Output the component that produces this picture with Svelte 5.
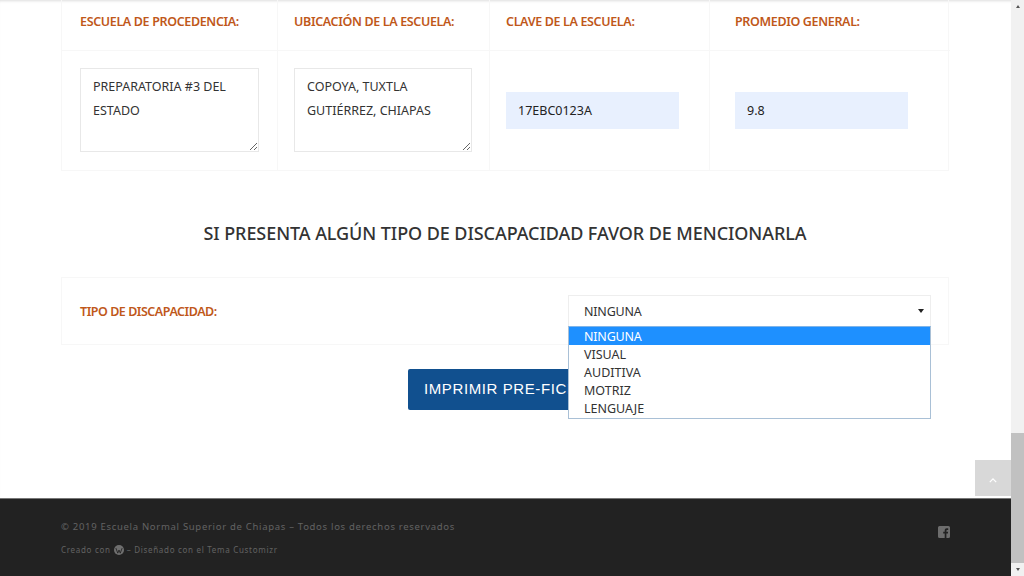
<script lang="ts">
	const options = ['NINGUNA', 'VISUAL', 'AUDITIVA', 'MOTRIZ', 'LENGUAJE']
	let selected = $state('NINGUNA')
	let school = $state('PREPARATORIA #3 DEL ESTADO')
	let place = $state('COPOYA, TUXTLA GUTIÉRREZ, CHIAPAS')
</script>

<div class="window">
	<div class="page">
		<main>
			<section class="school">
				<div class="cell head">ESCUELA DE PROCEDENCIA:</div>
				<div class="cell head">UBICACIÓN DE LA ESCUELA:</div>
				<div class="cell head">CLAVE DE LA ESCUELA:</div>
				<div class="cell head">PROMEDIO GENERAL:</div>
				<div class="cell body"><textarea bind:value={school}></textarea></div>
				<div class="cell body"><textarea bind:value={place}></textarea></div>
				<div class="cell body"><input value="17EBC0123A" /></div>
				<div class="cell body"><input value="9.8" /></div>
			</section>

			<h2>SI PRESENTA ALGÚN TIPO DE DISCAPACIDAD FAVOR DE MENCIONARLA</h2>

			<section class="disability">
				<div class="label">TIPO DE DISCAPACIDAD:</div>
				<div class="picker">
					<div class="select">
						<span>{selected}</span>
						<i class="caret"></i>
					</div>
					<ul class="options">
						{#each options as option}
							<li class:active={option === selected}>{option}</li>
						{/each}
					</ul>
				</div>
			</section>

			<div class="actions">
				<button type="button">IMPRIMIR PRE-FICHA</button>
			</div>
		</main>

		<footer>
			<div>
				<p class="copy">© 2019 Escuela Normal Superior de Chiapas – Todos los derechos reservados</p>
				<p class="credit">
					<span>Creado con</span>
					<svg viewBox="0 0 16 16" width="10" height="10">
						<circle cx="8" cy="8" r="8" fill="#6f6f6f" />
						<path d="M3 5l3 8 2-5 2 5 3-8" fill="none" stroke="#222" stroke-width="1.4" />
					</svg>
					<span>– Diseñado con el Tema Customizr</span>
				</p>
			</div>
			<svg class="fb" viewBox="0 0 12 12" width="12" height="12">
				<path
					fill="#6d6d6d"
					fill-rule="evenodd"
					d="M1.5 0h9A1.5 1.5 0 0 1 12 1.5v9a1.5 1.5 0 0 1-1.5 1.5H8.4V7.5h1.5l.2-1.7H8.4V4.7c0-.5.2-.8.8-.8h1V2.4c-.3 0-.8-.1-1.3-.1-1.3 0-2.2.8-2.2 2.2v1.3H5.2v1.7h1.5V12H1.5A1.5 1.5 0 0 1 0 10.5v-9A1.5 1.5 0 0 1 1.5 0z"
				/>
			</svg>
		</footer>

		<button type="button" class="to-top" aria-label="Volver arriba">
			<svg viewBox="0 0 10 6" width="8" height="5">
				<path d="M1 5l4-4 4 4" fill="none" stroke="#fff" stroke-width="1.6" />
			</svg>
		</button>
	</div>

	<aside class="scrollbar">
		<span class="arrow up"></span>
		<div class="track"><div class="thumb"></div></div>
		<span class="arrow down"></span>
	</aside>
</div>

<style>
	:global(body) {
		margin: 0;
		background: #fff;
	}

	.window {
		display: flex;
		height: 576px;
		overflow: hidden;
		font-family: 'Noto Sans', 'Open Sans', sans-serif;
		color: #333;
	}

	.page {
		position: relative;
		flex: 1;
		display: flex;
		flex-direction: column;
		min-width: 0;
		box-shadow: inset 0 3px 3px -2px #ddd;
	}

	main {
		flex: 1;
		padding: 0 62px 0 61px;
	}

	.school {
		display: grid;
		grid-template-columns: 216px 212px 220px 240px;
		border: 1px solid #f7f7f7;
		border-top: 0;
	}

	.cell {
		padding: 0 16px;
		box-sizing: border-box;
		border-right: 1px solid #f7f7f7;
	}

	.cell:nth-child(4n + 1) {
		padding-left: 18px;
	}

	.cell:nth-child(4n) {
		border-right: 0;
		padding-left: 25px;
	}

	.head {
		height: 51px;
		padding-top: 12px;
		border-bottom: 1px solid #f7f7f7;
		font-size: 12.5px;
		line-height: 20px;
		font-weight: 600;
		letter-spacing: -0.35px;
		color: #c0581a;
	}

	.body {
		height: 119px;
		display: flex;
		align-items: center;
	}

	textarea {
		width: 179px;
		height: 84px;
		margin-bottom: 2px;
		box-sizing: border-box;
		padding: 6px 12px;
		border: 1px solid #e8e8e8;
		background: #fff;
		font: 12.5px/24px 'Noto Sans', sans-serif;
		color: #333;
	}

	.cell:nth-child(6) textarea {
		width: 178px;
	}

	input {
		width: 173px;
		height: 37px;
		box-sizing: border-box;
		padding: 0 12px;
		border: 0;
		background: #e8f0fe;
		font: 12.5px 'Noto Sans', sans-serif;
		color: #222;
	}

	h2 {
		margin: 49px 0 0;
		font-size: 18px;
		line-height: 26px;
		font-weight: 500;
		letter-spacing: -0.07px;
		text-align: center;
		color: #333;
	}

	.disability {
		margin-top: 31px;
		height: 68px;
		box-sizing: border-box;
		display: flex;
		align-items: center;
		justify-content: space-between;
		padding: 0 17px 0 18px;
		border: 1px solid #f7f7f7;
	}

	.label {
		font-size: 12.5px;
		font-weight: 600;
		letter-spacing: -0.47px;
		color: #c0581a;
	}

	.picker {
		position: relative;
		width: 363px;
	}

	.select {
		height: 32px;
		box-sizing: border-box;
		display: flex;
		align-items: center;
		justify-content: space-between;
		padding: 0 6px 0 15px;
		border: 1px solid #eee;
		font-size: 12.5px;
		letter-spacing: -0.2px;
		color: #333;
	}

	.caret {
		width: 0;
		height: 0;
		border: 3px solid transparent;
		border-top: 4px solid #222;
		border-bottom: 0;
	}

	.options {
		position: absolute;
		z-index: 2;
		top: 31px;
		left: 0;
		right: 0;
		margin: 0;
		padding: 0 0 1px;
		list-style: none;
		background: #fff;
		border: 1px solid #a9c0d6;
		border-top-color: #7fb4e8;
		box-sizing: border-box;
		font-size: 12.5px;
		line-height: 20px;
	}

	.options li {
		height: 18px;
		padding-left: 15px;
	}

	.options .active {
		background: #1e90ff;
		color: #fff;
		letter-spacing: -0.2px;
	}

	.actions {
		margin-top: 24px;
		display: flex;
		justify-content: center;
	}

	.actions button {
		width: 194px;
		height: 41px;
		border: 0;
		border-radius: 2px;
		background: #11508f;
		color: #fff;
		font: 15px 'Liberation Sans', Arial, sans-serif;
		letter-spacing: 0.6px;
		white-space: nowrap;
		overflow: hidden;
		padding: 0 0 2px 16px;
		text-align: left;
	}

	footer {
		height: 78px;
		box-sizing: border-box;
		display: flex;
		justify-content: space-between;
		align-items: flex-start;
		padding: 21px 61px 0;
		background: #222;
		border-top: 1px solid #777;
		color: #626262;
	}

	footer p {
		margin: 0;
	}

	.copy {
		font-size: 9.5px;
		line-height: 14px;
		letter-spacing: 0.7px;
	}

	.credit {
		margin-top: 9px !important;
		display: flex;
		align-items: center;
		gap: 3px;
		font-size: 8px;
		line-height: 14px;
		letter-spacing: 0.7px;
	}

	.fb {
		margin: 6px 0 0;
	}

	.to-top {
		position: absolute;
		right: 0;
		top: 460px;
		width: 36px;
		height: 36px;
		padding: 0;
		border: 0;
		background: #d8d8d8;
	}

	.scrollbar {
		width: 13px;
		display: flex;
		flex-direction: column;
		background: #f1f1f1;
	}

	.arrow {
		height: 13px;
		display: flex;
		align-items: center;
		justify-content: center;
	}

	.arrow::before {
		content: '';
		border: 2.5px solid transparent;
	}

	.up::before {
		border-bottom: 3px solid #555;
		border-top: 0;
	}

	.down::before {
		border-top: 3px solid #555;
		border-bottom: 0;
	}

	.track {
		flex: 1;
		padding-top: 420px;
	}

	.thumb {
		height: 130px;
		background: #c1c1c1;
	}
</style>
